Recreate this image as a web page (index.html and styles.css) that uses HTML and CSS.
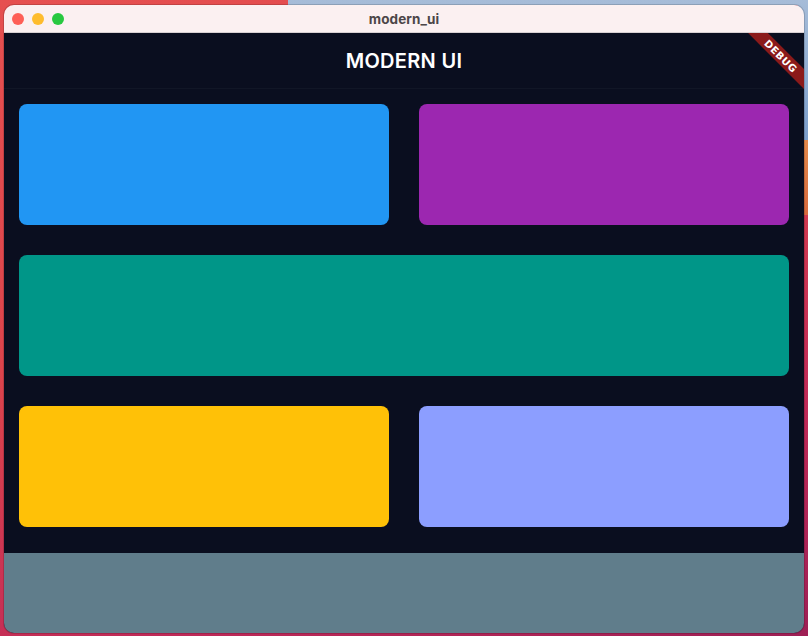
FILE: index.html
```html
<!DOCTYPE html>
<html>
<head>
<meta charset="utf-8">
<link rel="stylesheet" href="styles.css">
</head>
<body>
<div class="desktop">
  <div class="window">
    <div class="titlebar">
      <div class="lights">
        <span class="light red"></span>
        <span class="light yellow"></span>
        <span class="light green"></span>
      </div>
      <div class="title">modern_ui</div>
    </div>
    <div class="app">
      <header class="appbar">MODERN UI</header>
      <main class="grid">
        <div class="card blue"></div>
        <div class="card purple"></div>
        <div class="card teal wide"></div>
        <div class="card amber"></div>
        <div class="card indigo"></div>
      </main>
      <footer class="bottom"></footer>
      <div class="debug"><span>DEBUG</span></div>
    </div>
  </div>
</div>
</body>
</html>
```
FILE: styles.css
```css
* { box-sizing: border-box; }
html, body { margin: 0; padding: 0; }
body { width: 808px; height: 636px; overflow: hidden; font-family: "Inter", "Noto Sans", sans-serif; }
.desktop {
  width: 808px; height: 636px;
  padding: 5px 4px 3px 4px;
  background: linear-gradient(160deg, #e65050 0%, #dc444c 40%, #c02a58 75%, #9e1f55 100%);
  position: relative;
}
.desktop::after {
  content: ""; position: absolute; right: 0; top: 0; width: 520px; height: 140px;
  background: linear-gradient(180deg, #a6bcd8 0%, #7c9fcc 100%);
  clip-path: polygon(0 0, 100% 0, 100% 100%, 98% 100%, 98% 4%, 0 4%);
  z-index: 0;
}
.desktop::before {
  content: ""; position: absolute; right: 0; top: 140px; width: 30px; height: 75px;
  background: linear-gradient(180deg, #e48a4c, #d86a3e);
  z-index: 0;
}
.window {
  position: relative; z-index: 1;
  width: 800px; height: 628px;
  border-radius: 10px;
  overflow: hidden;
  display: flex; flex-direction: column;
  box-shadow: 0 0 0 1px rgba(0,0,0,0.15);
}
.titlebar {
  height: 28px; flex: none;
  background: #fbf0f1;
  display: flex; align-items: center; justify-content: center;
  position: relative;
  border-bottom: 1px solid #d8d0d2;
}
.lights { position: absolute; left: 8px; top: 8px; display: flex; gap: 8px; }
.light { width: 12px; height: 12px; border-radius: 50%; display: block; }
.light.red { background: #fe5f57; }
.light.yellow { background: #febc2e; }
.light.green { background: #28c840; }
.title { font-size: 13.5px; font-weight: 700; color: #4c4648; letter-spacing: 0.1px; }
.app { flex: 1; background: #0a0e1f; display: flex; flex-direction: column; position: relative; overflow: hidden; }
.appbar {
  height: 56px; flex: none;
  display: flex; align-items: center; justify-content: center;
  color: #ffffff; font-size: 20px; font-weight: 600; letter-spacing: 0.3px;
  border-bottom: 1px solid #111626;
}
.grid {
  padding: 15px 15px 0 15px;
  display: grid;
  grid-template-columns: 370px 370px;
  grid-auto-rows: 121px;
  column-gap: 30px; row-gap: 30px;
  height: 464px; flex: none;
}
.card { border-radius: 8px; }
.wide { grid-column: 1 / span 2; }
.blue { background: #2196f3; }
.purple { background: #9c27b0; }
.teal { background: #009688; }
.amber { background: #ffc107; }
.indigo { background: #8c9eff; }
.bottom { flex: 1; background: #607d8b; }
.debug {
  position: absolute; top: 0; right: 0; width: 80px; height: 80px; overflow: hidden;
}
.debug span {
  position: absolute; top: 16px; right: -32px; width: 110px; height: 14px;
  background: #8b1a1a; color: #fff;
  transform: rotate(45deg);
  font-size: 10px; font-weight: 900; letter-spacing: 0.5px;
  display: flex; align-items: center; justify-content: center;
  font-family: "DejaVu Sans", sans-serif;
}
```
